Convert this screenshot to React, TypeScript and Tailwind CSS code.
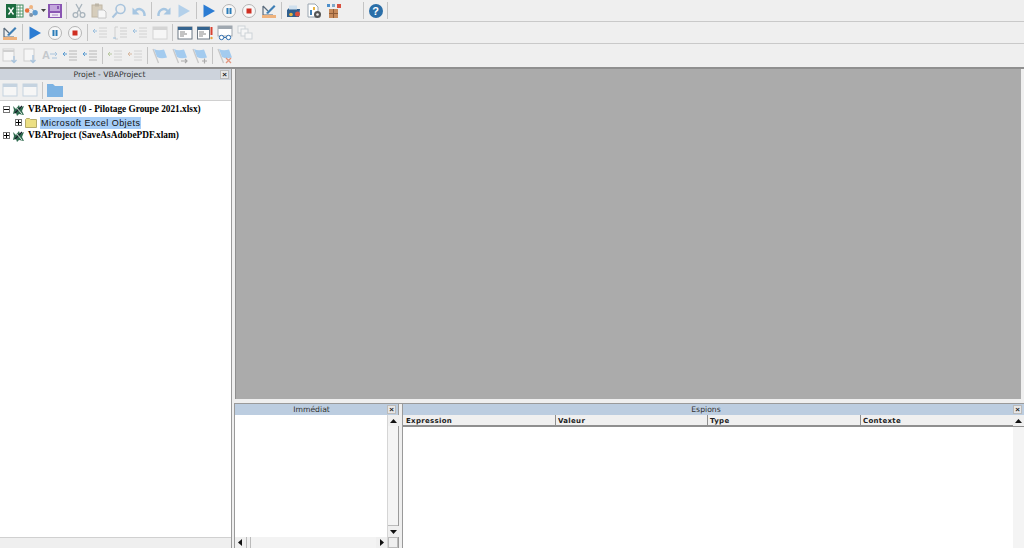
import type { ReactNode } from 'react'

function Ico({ children, w = 16 }: { children: ReactNode; w?: number }) {
  return (
    <svg width={w} height="16" viewBox={'0 0 ' + w + ' 16'} fill="none" className="block">
      {children}
    </svg>
  )
}

function Slot({ children, w = 'w-5' }: { children?: ReactNode; w?: string }) {
  return <div className={w + ' h-full flex items-center justify-center shrink-0'}>{children}</div>
}

function Sep() {
  return <div className="w-[5px] h-full flex items-center justify-center shrink-0"><div className="w-px h-[17px] bg-[#c4c4c4]" /></div>
}

const Excel = () => (
  <Ico w={19}>
    <rect x="8" y="2" width="10" height="12" fill="#fff" stroke="#3c8a5c" />
    <path d="M12 2v12M15 2v12M8 5h10M8 8h10M8 11h10" stroke="#3c8a5c" strokeWidth="0.8" />
    <rect x="1" y="1" width="10" height="14" fill="#1c6b40" />
    <path d="M3.5 4.500l5 7M8.500 4.500l-5 7" stroke="#fff" strokeWidth="1.300" />
  </Ico>
)
const Nodes = () => (
  <Ico w={18}>
    <path d="M3 7l5-3 5 6-4 3z" stroke="#9fb0c0" />
    <circle cx="3.500" cy="7.500" r="2.500" fill="#e8703a" />
    <circle cx="8" cy="3.500" r="2.200" fill="#f0b37e" />
    <circle cx="12.500" cy="10" r="3" fill="#5f9bd0" />
    <circle cx="8" cy="12.500" r="2.200" fill="#8494a5" />
  </Ico>
)
const Save = () => (
  <Ico>
    <path d="M1 1h14v14H1z" fill="#8a55b3" />
    <rect x="3" y="2" width="10" height="6" fill="#c3a6dc" />
    <rect x="10" y="3" width="2" height="3" fill="#8a55b3" />
    <rect x="3" y="10" width="10" height="4" fill="#efe7f5" />
    <path d="M5 12h6" stroke="#a98ac4" />
  </Ico>
)
const Cut = () => (
  <Ico>
    <path d="M5 1l5 9M11 1L6 10" stroke="#a9b4bc" strokeWidth="1.300" />
    <circle cx="4.500" cy="12" r="2.400" stroke="#a9b4bc" strokeWidth="1.300" />
    <circle cx="11.500" cy="12" r="2.400" stroke="#a9b4bc" strokeWidth="1.300" />
  </Ico>
)
const Paste = () => (
  <Ico>
    <rect x="1" y="2" width="10" height="12" fill="#d6cdbc" stroke="#c0b6a4" />
    <rect x="4" y="0.500" width="4" height="3" fill="#bdb5a6" />
    <path d="M7 7h6l2 2v6H7z" fill="#f7f7f7" stroke="#c6c6c6" />
  </Ico>
)
const Search = () => (
  <Ico>
    <circle cx="9.500" cy="6" r="4.500" stroke="#a9c4dd" strokeWidth="1.600" />
    <path d="M6 9.500L1.500 14.500" stroke="#a9c4dd" strokeWidth="2" />
  </Ico>
)
const Undo = () => (
  <Ico>
    <path d="M13.500 13C14 7 8 4 4.500 8" stroke="#a6c6e2" strokeWidth="2.400" />
    <path d="M1.500 4.500v7h7z" fill="#a6c6e2" />
  </Ico>
)
const Redo = () => (
  <Ico>
    <path d="M2.500 13C2 7 8 4 11.500 8" stroke="#a6c6e2" strokeWidth="2.400" />
    <path d="M14.500 4.500v7h-7z" fill="#a6c6e2" />
  </Ico>
)
const Play = ({ faded }: { faded?: boolean }) => (
  <Ico>
    <path d="M2.500 1.500L14 8 2.500 14.500z" fill={faded ? '#b3d0ea' : '#2b7cd3'} />
  </Ico>
)
const Pause = () => (
  <Ico>
    <circle cx="8" cy="8" r="6.500" fill="#f7f7f7" stroke="#b5b5b5" />
    <rect x="5.500" y="5" width="2" height="6" fill="#2b7cb8" />
    <rect x="8.500" y="5" width="2" height="6" fill="#2b7cb8" />
  </Ico>
)
const Stop = () => (
  <Ico>
    <circle cx="8" cy="8" r="6.500" fill="#f7f7f7" stroke="#b5b5b5" />
    <rect x="5.500" y="5.500" width="5" height="5" fill="#cf2f22" />
  </Ico>
)
const Design = () => (
  <Ico>
    <path d="M2 3l5 5M2 3v9h10" stroke="#5a6b7c" strokeWidth="1.200" />
    <path d="M5 10l8-8 1.500 1.500L7 11z" fill="#3f7fb5" />
    <rect x="1" y="12" width="14" height="3" fill="#efb27c" />
  </Ico>
)
const Explorer = () => (
  <Ico>
    <path d="M1 7l3-3h5l1 2h4l-1 8H1z" fill="#2f5f8f" />
    <rect x="3" y="2.500" width="8" height="4" fill="#cfe0ee" />
    <circle cx="11.500" cy="11" r="2.500" fill="#d8503f" />
    <circle cx="5" cy="11.500" r="1.800" fill="#e9b33f" />
  </Ico>
)
const Props = () => (
  <Ico>
    <path d="M2 1h7l3 3v10H2z" fill="#fff" stroke="#9aa5b0" />
    <rect x="4" y="7" width="2" height="5" fill="#3f7fb5" />
    <rect x="7" y="4" width="2" height="3" fill="#e9b33f" />
    <circle cx="11.500" cy="11.500" r="3.500" fill="#555" />
    <circle cx="11.500" cy="11.500" r="1.300" fill="#eee" />
  </Ico>
)
const Box = () => (
  <Ico>
    <rect x="3" y="6" width="9" height="9" fill="#c68a5b" />
    <path d="M7.500 6v9M3 10.500h9" stroke="#8e5c38" />
    <rect x="1" y="1" width="3" height="3" fill="#4d8fcb" />
    <rect x="6" y="1" width="3" height="3" fill="#7fa9c9" />
    <rect x="11" y="1" width="4" height="4" fill="#d8503f" />
  </Ico>
)
const Help = () => (
  <div className="w-[14px] h-[14px] rounded-full bg-[#2a6ea8] text-white text-[11px] font-bold leading-[14px] text-center [font-family:'Liberation_Sans',sans-serif]">?</div>
)
const Lines = ({ tone, arrow }: { tone: string; arrow?: string }) => (
  <Ico>
    <path d="M7 3h8M7 6h8M7 9h8M7 12h8" stroke={tone} />
    <path d="M1 6h4M3 4l-2 2 2 2" stroke={arrow ?? '#9cc0de'} />
  </Ico>
)
const Bracket = () => (
  <Ico>
    <path d="M6 2H3v12h3M8 3h7M8 6h7M8 9h7M8 12h7" stroke="#cfcfcf" />
    <path d="M1 13h3" stroke="#9cc0de" />
  </Ico>
)
const Win = ({ tone = '#d4d4d4' }: { tone?: string }) => (
  <Ico>
    <rect x="1" y="2" width="14" height="12" fill="#f6f6f6" stroke={tone} />
    <rect x="1" y="2" width="14" height="3" fill={tone} />
  </Ico>
)
const WinCode = () => (
  <Ico>
    <rect x="1" y="2" width="14" height="12" fill="#fff" stroke="#6f7b86" />
    <rect x="1" y="2" width="14" height="3" fill="#35648f" />
    <path d="M3 7h5M3 9h7M3 11h4" stroke="#888" />
  </Ico>
)
const WinBang = () => (
  <Ico>
    <rect x="0.500" y="2" width="12" height="12" fill="#fff" stroke="#6f7b86" />
    <rect x="0.500" y="2" width="12" height="3" fill="#35648f" />
    <path d="M2 7h5M2 9h7M2 11h4" stroke="#888" />
    <path d="M14.500 2v8" stroke="#d8402f" strokeWidth="2" />
    <circle cx="14.500" cy="13" r="1.200" fill="#e8a23c" />
  </Ico>
)
const WinGlasses = () => (
  <Ico>
    <rect x="1" y="1" width="14" height="10" fill="#fff" stroke="#a0a8b0" />
    <rect x="1" y="1" width="14" height="3" fill="#a0a8b0" />
    <circle cx="4.500" cy="12.500" r="2.200" fill="#fff" stroke="#2f6fb0" />
    <circle cx="11.500" cy="12.500" r="2.200" fill="#fff" stroke="#2f6fb0" />
    <path d="M7 12.500h2" stroke="#2f6fb0" />
  </Ico>
)
const Stack = () => (
  <Ico>
    <rect x="1" y="1" width="7" height="7" fill="#f6f6f6" stroke="#cdd3d8" />
    <rect x="4" y="4" width="7" height="7" fill="#f6f6f6" stroke="#cdd3d8" />
    <rect x="8" y="8" width="7" height="6" fill="#f6f6f6" stroke="#cdd3d8" />
  </Ico>
)
const WinDown = () => (
  <Ico>
    <rect x="1" y="1" width="11" height="12" fill="#f6f6f6" stroke="#cfcfcf" />
    <path d="M1 3h11" stroke="#cfcfcf" strokeWidth="2" />
    <path d="M12 8v6M9.500 12l2.500 2.500 2.500-2.500" stroke="#a9c4dd" strokeWidth="1.300" />
  </Ico>
)
const PageDown = () => (
  <Ico>
    <rect x="2" y="1" width="10" height="12" fill="#f6f6f6" stroke="#cfcfcf" />
    <path d="M11 7v7M8.500 12l2.500 2.500 2.500-2.500" stroke="#a9c4dd" strokeWidth="1.300" />
  </Ico>
)
const AWord = () => (
  <div className="flex items-center text-[11px] leading-none text-[#c4c8cc] font-bold [font-family:'Liberation_Sans',sans-serif]">
    A
    <svg width="8" height="10" viewBox="0 0 8 10" fill="none"><path d="M0 3h7M5 1l2 2-2 2M2 7h5" stroke="#a9c4dd" /></svg>
  </div>
)
const Flag = ({ mark }: { mark?: string }) => (
  <Ico>
    <path d="M1 1l5.500 14" stroke="#c8c8c8" strokeWidth="1.300" />
    <path d="M2 1c3 1.500 6 1.500 10 .5l3 8c-4 1-7 1-10-.5z" fill="#a3cbef" />
    {mark === 'right' && <path d="M9 13h6M13 11l2 2-2 2" stroke="#aaa" strokeWidth="1.200" />}
    {mark === 'plus' && <path d="M10 13h5M12.500 10.500v5" stroke="#aaa" strokeWidth="1.200" />}
    {mark === 'x' && <path d="M9 10l5 5M14 10l-5 5" stroke="#e2967f" strokeWidth="1.300" />}
  </Ico>
)

function Bar({ children, lead = '' }: { children: ReactNode; lead?: string }) {
  return <div className={'h-[22px] flex items-center border-b border-[#c9c9c9] shrink-0 ' + lead}>{children}</div>
}

function Title({ label, tone, pad = 'pl-[3px]' }: { label: string; tone: string; pad?: string }) {
  return (
    <div className={'h-[11px] flex items-center shrink-0 ' + tone}>
      <div className={'flex-1 text-center text-[7.700px] leading-[11px] text-[#333] [font-family:\'DejaVu_Sans\',sans-serif] ' + pad}>{label}</div>
      <div className="w-[9px] h-[9px] mr-[2px] bg-[#e6e6e6] border border-[#bbb] flex items-center justify-center text-[8px] leading-none font-bold text-[#222] [font-family:'Liberation_Sans',sans-serif]">×</div>
    </div>
  )
}

function Arrow({ dir }: { dir: 'up' | 'down' | 'left' | 'right' }) {
  const d = { up: 'M3.500 2L7 6H0z', down: 'M0 2h7L3.500 6z', left: 'M5 0v7L1 3.500z', right: 'M2 0v7l4-3.500z' }[dir]
  return <svg width="7" height="7" viewBox="0 0 7 7" className="block"><path d={d} fill="#111" /></svg>
}

function ArrowBtn({ dir }: { dir: 'up' | 'down' | 'left' | 'right' }) {
  return <div className="w-[11px] h-[11px] flex items-center justify-center bg-[#efefef] shrink-0"><Arrow dir={dir} /></div>
}

function Expander({ open }: { open?: boolean }) {
  return (
    <div className="w-[7px] h-[7px] border border-[#777] bg-white relative shrink-0">
      <div className="absolute left-0 right-0 top-[2px] h-px bg-black" />
      {!open && <div className="absolute top-0 bottom-0 left-[2px] w-px bg-black" />}
    </div>
  )
}

const VbaIcon = () => (
  <svg width="13" height="12" viewBox="0 0 13 12" fill="none" className="block shrink-0">
    <path d="M1 2l3 3 3-4 1 3 4-2-2 5 2 4-5-1-2 2-1-3-3 1 1-4z" fill="#2f6b4f" />
    <path d="M3 9l7-7" stroke="#16202a" strokeWidth="1.200" />
    <path d="M4 3l6 7" stroke="#dfe7e2" />
  </svg>
)

const Folder = () => (
  <svg width="12" height="10" viewBox="0 0 12 10" className="block shrink-0">
    <path d="M0.500 2V1.500L1.500 .5h3l1 1h6v8h-11z" fill="#ecdf83" stroke="#b5ab6a" />
  </svg>
)

export default function App() {
  return (
    <div className="w-[1024px] h-[548px] overflow-hidden flex flex-col bg-[#efefef]">
      <Bar lead="pl-1">
        <Slot><Excel /></Slot>
        <Slot w="w-4"><Nodes /></Slot>
        <Slot w="w-[6px]"><svg width="5" height="3" viewBox="0 0 5 3"><path d="M0 0h5L2.500 3z" fill="#444" /></svg></Slot>
        <Slot w="w-[18px]"><Save /></Slot>
        <Sep />
        <Slot><Cut /></Slot><Slot><Paste /></Slot><Slot><Search /></Slot><Slot><Undo /></Slot>
        <Sep />
        <Slot><Redo /></Slot><Slot><Play faded /></Slot>
        <Sep />
        <Slot><Play /></Slot><Slot><Pause /></Slot><Slot><Stop /></Slot><Slot><Design /></Slot>
        <Sep />
        <Slot><Explorer /></Slot><Slot><Props /></Slot><Slot><Box /></Slot>
        <div className="w-[17px]" />
        <Sep />
        <Slot w="w-[19px]"><Help /></Slot>
        <Sep />
      </Bar>
      <Bar>
        <Slot><Design /></Slot>
        <Sep />
        <Slot><Play /></Slot><Slot><Pause /></Slot><Slot><Stop /></Slot>
        <Sep />
        <Slot><Lines tone="#d2d2d2" /></Slot><Slot><Bracket /></Slot><Slot><Lines tone="#d2d2d2" /></Slot><Slot><Win /></Slot>
        <Sep />
        <Slot><WinCode /></Slot><Slot><WinBang /></Slot><Slot><WinGlasses /></Slot><Slot><Stack /></Slot>
      </Bar>
      <div className="h-[23px] flex items-center shrink-0">
        <Slot><WinDown /></Slot><Slot><PageDown /></Slot><Slot><AWord /></Slot>
        <Slot><Lines tone="#b8b8b8" arrow="#5b9bd0" /></Slot><Slot><Lines tone="#b8b8b8" arrow="#5b9bd0" /></Slot>
        <Sep />
        <Slot><Lines tone="#d2d2d2" arrow="#b8c8a0" /></Slot><Slot><Lines tone="#d2d2d2" arrow="#d8b8a0" /></Slot>
        <Sep />
        <Slot><Flag /></Slot><Slot><Flag mark="right" /></Slot><Slot><Flag mark="plus" /></Slot>
        <Sep />
        <Slot><Flag mark="x" /></Slot>
      </div>

      <div className="flex-1 min-h-0 flex border-t-2 border-[#8f8f8f]">
        <div className="w-[232px] flex flex-col shrink-0 border-r border-[#9a9a9a]">
          <Title label="Projet - VBAProject" tone="bg-[#cdd3dc]" pad="pr-px" />
          <div className="h-[21px] flex items-center border-b border-[#d0d0d0] shrink-0">
            <Slot><Win tone="#c5d3e0" /></Slot><Slot><Win tone="#c5d3e0" /></Slot>
            <Sep />
            <Slot>
              <svg width="16" height="14" viewBox="0 0 16 14"><path d="M0 1h6l2 2h8v11H0z" fill="#7db3e3" /></svg>
            </Slot>
          </div>
          <div className="flex-1 bg-white pt-[2px] [font-family:'Liberation_Serif',serif] font-bold text-[9.300px] leading-[13px] text-black">
            <div className="flex items-center h-[13px] pl-[3px] gap-[2px]">
              <Expander open /><VbaIcon /><span className="ml-px">VBAProject (0 - Pilotage Groupe 2021.xlsx)</span>
            </div>
            <div className="flex items-center h-[13px] pl-[15px] gap-[3px]">
              <Expander /><Folder />
              <span className="bg-[#a6cdf7] px-px font-normal text-[9px] leading-[12px] tracking-[0.45px] text-[#111] [font-family:'Liberation_Sans',sans-serif]">Microsoft Excel Objets</span>
            </div>
            <div className="flex items-center h-[13px] pl-[3px] gap-[2px]">
              <Expander /><VbaIcon /><span className="ml-px">VBAProject (SaveAsAdobePDF.xlam)</span>
            </div>
          </div>
          <div className="h-[11px] bg-[#efefef] border-t border-[#d0d0d0] shrink-0" />
        </div>

        <div className="flex-1 min-w-0 flex flex-col pl-[2px]">
          <div className="flex-1 min-h-0 bg-[#ababab] ml-px mr-[3px] border-l border-[#8f8f8f]" />
          <div className="h-[5px] shrink-0 border-b border-[#9a9a9a]" />
          <div className="h-[144px] flex shrink-0">
            <div className="w-[165px] flex flex-col border-x border-[#9a9a9a] shrink-0">
              <Title label="Immédiat" tone="bg-[#bccde0]" pad="pl-px" />
              <div className="flex-1 min-h-0 flex">
                <div className="flex-1 flex flex-col min-w-0">
                  <div className="flex-1 bg-white" />
                  <div className="h-[11px] flex items-center bg-[#f3f3f3] shrink-0">
                    <ArrowBtn dir="left" />
                    <div className="w-[5px] h-full border-x border-[#bbb] bg-[#efefef]" />
                    <div className="flex-1" />
                    <ArrowBtn dir="right" />
                  </div>
                </div>
                <div className="w-[11px] flex flex-col bg-[#efefef] border-l border-[#d5d5d5] shrink-0">
                  <ArrowBtn dir="up" />
                  <div className="flex-1 bg-[#f4f4f4] border-b border-[#bbb]" />
                  <ArrowBtn dir="down" />
                  <div className="h-[11px] border border-[#bbb]" />
                </div>
              </div>
            </div>
            <div className="w-[3px] shrink-0" />
            <div className="flex-1 min-w-0 flex flex-col border-l border-[#9a9a9a]">
              <Title label="Espions" tone="bg-[#bccde0]" pad="pr-[4px]" />
              <div className="h-[12px] flex shrink-0 bg-[#f0f0f0] border-b-2 border-[#8f8f8f] text-[7px] leading-[12px] font-bold tracking-[0.3px] text-[#222] [font-family:'DejaVu_Sans',sans-serif]">
                <div className="w-[153px] pl-[3px] border-r border-[#8f8f8f]">Expression</div>
                <div className="w-[152px] pl-[2px] border-r border-[#8f8f8f]">Valeur</div>
                <div className="w-[153px] pl-[2px] border-r border-[#8f8f8f]">Type</div>
                <div className="flex-1 pl-[2px]">Contexte</div>
                <ArrowBtn dir="up" />
              </div>
              <div className="flex-1 min-h-0 flex bg-white">
                <div className="flex-1" />
                <div className="w-[11px] bg-[#f4f4f4] shrink-0" />
              </div>
            </div>
          </div>
        </div>
      </div>
    </div>
  )
}
